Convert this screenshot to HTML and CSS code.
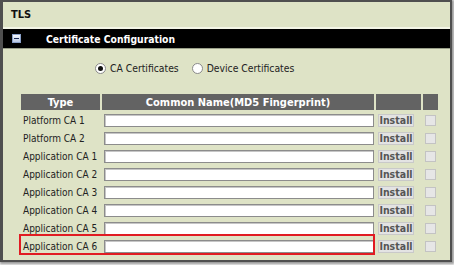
FILE: index.html
```html
<!DOCTYPE html>
<html>
<head>
<meta charset="utf-8">
<link rel="stylesheet" href="styles.css">
</head>
<body>
<div class="window">
  <div class="title">TLS</div>
  <div class="section-bar">
    <span class="toggle"><span class="toggle-bar"></span></span>
    <span class="section-title">Certificate Configuration</span>
  </div>
  <div class="radios">
    <label class="radio-item"><span class="radio checked"></span>CA Certificates</label>
    <label class="radio-item"><span class="radio"></span>Device Certificates</label>
  </div>
  <div class="table-wrap">
    <table class="certs">
      <colgroup>
        <col class="c-type"><col class="c-name"><col class="c-inst"><col class="c-chk">
      </colgroup>
      <thead>
        <tr><th>Type</th><th>Common Name(MD5 Fingerprint)</th><th></th><th></th></tr>
      </thead>
      <tbody>
        <tr><td class="lbl">Platform CA 1</td><td><span class="field"></span></td><td><span class="btn">Install</span></td><td class="ck"><span class="chk"></span></td></tr>
        <tr><td class="lbl">Platform CA 2</td><td><span class="field"></span></td><td><span class="btn">Install</span></td><td class="ck"><span class="chk"></span></td></tr>
        <tr><td class="lbl">Application CA 1</td><td><span class="field"></span></td><td><span class="btn">Install</span></td><td class="ck"><span class="chk"></span></td></tr>
        <tr><td class="lbl">Application CA 2</td><td><span class="field"></span></td><td><span class="btn">Install</span></td><td class="ck"><span class="chk"></span></td></tr>
        <tr><td class="lbl">Application CA 3</td><td><span class="field"></span></td><td><span class="btn">Install</span></td><td class="ck"><span class="chk"></span></td></tr>
        <tr><td class="lbl">Application CA 4</td><td><span class="field"></span></td><td><span class="btn">Install</span></td><td class="ck"><span class="chk"></span></td></tr>
        <tr><td class="lbl">Application CA 5</td><td><span class="field"></span></td><td><span class="btn">Install</span></td><td class="ck"><span class="chk"></span></td></tr>
        <tr><td class="lbl">Application CA 6</td><td><span class="field"></span></td><td><span class="btn">Install</span></td><td class="ck"><span class="chk"></span></td></tr>
      </tbody>
    </table>
    <div class="highlight"></div>
  </div>
</div>
</body>
</html>
```
FILE: styles.css
```css
html, body {
  margin: 0;
  padding: 0;
  background: #f2f2f2;
}
body {
  width: 454px;
  height: 265px;
  overflow: hidden;
  font-family: "DejaVu Sans Condensed", "DejaVu Sans", sans-serif;
  font-size: 10px;
}
.window {
  box-sizing: border-box;
  width: 452px;
  height: 262px;
  background: #dee3c6;
  border-top: 2px solid #4f4f4f;
  border-left: 3px solid #4f4f4f;
  border-right: 2px solid #4f4f4f;
  border-bottom: 2px solid #4f4f4f;
  box-shadow: 1px 1px 2px 1px #9a9a9a;
}
.title {
  height: 25px;
  line-height: 26px;
  padding-left: 8px;
  font-size: 11px;
  font-weight: bold;
  color: #111;
  border-bottom: 2px solid #f3f5e6;
}
.section-bar {
  height: 19px;
  background: #000;
  display: flex;
  align-items: center;
  padding-left: 9px;
  border-bottom: 1px solid #9aa08a;
}
.toggle {
  box-sizing: border-box;
  width: 9px;
  height: 9px;
  border: 1px solid #8aa0c8;
  background: linear-gradient(#f4f7fc, #b9c8e2);
  display: flex;
  align-items: center;
  justify-content: center;
}
.toggle-bar {
  width: 5px;
  height: 1px;
  background: #1b2a55;
}
.section-title {
  color: #fff;
  font-weight: bold;
  font-size: 10.3px;
  margin-left: 25px;
}
.radios {
  display: flex;
  padding-left: 92px;
  margin-top: 12px;
  height: 14px;
  align-items: center;
  color: #222;
  font-size: 10.3px;
}
.radio-item {
  display: flex;
  align-items: center;
}
.radio-item + .radio-item {
  margin-left: 13px;
}
.radio {
  box-sizing: border-box;
  width: 11px;
  height: 11px;
  border-radius: 50%;
  border: 1px solid #8a8a8a;
  background: #fff;
  margin-right: 4px;
  display: flex;
  align-items: center;
  justify-content: center;
}
.radio.checked::after {
  content: "";
  width: 5px;
  height: 5px;
  border-radius: 50%;
  background: #111;
}
.table-wrap {
  position: relative;
  margin-top: 17px;
  margin-left: 16px;
}
.certs {
  border-collapse: separate;
  border-spacing: 2px;
  table-layout: fixed;
  width: 421px;
}
.c-type { width: 79px; }
.c-name { width: 272px; }
.c-inst { width: 45px; }
.c-chk { width: 15px; }
.certs th {
  background: #636363;
  color: #fff;
  font-weight: bold;
  font-size: 11px;
  height: 16px;
  padding: 0;
  text-align: center;
}
.certs td {
  height: 16px;
  padding: 0;
  vertical-align: middle;
}
.certs td.lbl {
  color: #222;
  padding-left: 2px;
  white-space: nowrap;
}
.field {
  display: block;
  box-sizing: border-box;
  width: 270px;
  height: 13px;
  margin-left: 2px;
  background: #fff;
  border: 1px solid #8c8c8c;
  box-shadow: inset 1px 1px 0 #c6c6c6;
}
.btn {
  display: block;
  box-sizing: border-box;
  width: 36px;
  height: 13px;
  margin-left: 2px;
  background: #e3e3e3;
  border: 1px solid #c9c9c9;
  color: #555;
  font-weight: bold;
  font-size: 10.5px;
  line-height: 11px;
  text-align: center;
}
.ck {
  text-align: center;
}
.chk {
  display: inline-block;
  box-sizing: border-box;
  width: 11px;
  height: 11px;
  background: #e6e6e6;
  border: 1px solid #c3c3c3;
  vertical-align: middle;
}
.highlight {
  position: absolute;
  left: 0;
  top: 142px;
  width: 356px;
  height: 21px;
  box-sizing: border-box;
  border: 2px solid #e11b22;
}
```
